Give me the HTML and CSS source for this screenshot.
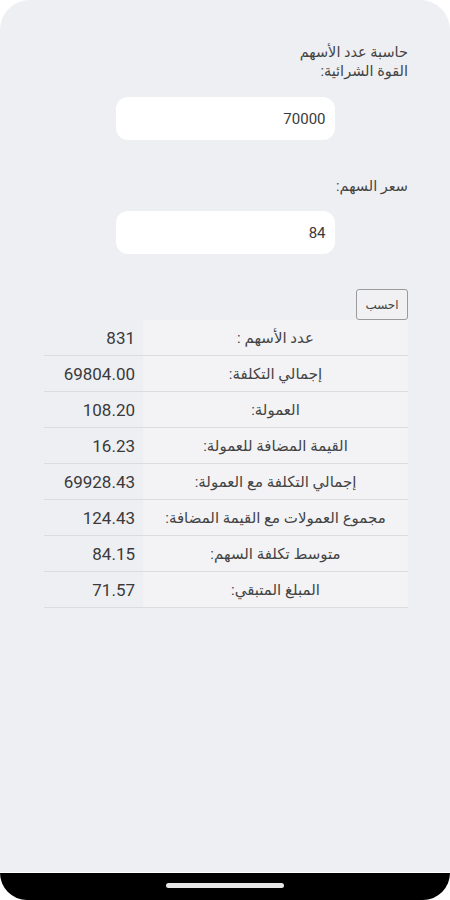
FILE: index.html
```html
<!DOCTYPE html>
<html lang="ar" dir="rtl">
<head>
    <meta charset="UTF-8">
    <meta name="viewport" content="width=device-width, initial-scale=1.0">
    <title>حاسبة عدد الأسهم</title>
    <link rel="stylesheet" href="styles.css">
</head>
<body>

    <div class="screen">
        <div class="app">
            <label class="label" for="power">حاسبة عدد الأسهم<br>القوة الشرائية:</label>
            <input type="text" id="power" class="field" value="70000">

            <label class="label label-price" for="price">سعر السهم:</label>
            <input type="text" id="price" class="field" value="84">

            <div class="actions">
                <button class="calc-btn">احسب</button>
            </div>

            <table class="results">
                <tr><td class="name">عدد الأسهم :</td><td class="val">831</td></tr>
                <tr><td class="name">إجمالي التكلفة:</td><td class="val">69804.00</td></tr>
                <tr><td class="name">العمولة:</td><td class="val">108.20</td></tr>
                <tr><td class="name">القيمة المضافة للعمولة:</td><td class="val">16.23</td></tr>
                <tr><td class="name">إجمالي التكلفة مع العمولة:</td><td class="val">69928.43</td></tr>
                <tr><td class="name">مجموع العمولات مع القيمة المضافة:</td><td class="val">124.43</td></tr>
                <tr><td class="name">متوسط تكلفة السهم:</td><td class="val">84.15</td></tr>
                <tr><td class="name">المبلغ المتبقي:</td><td class="val">71.57</td></tr>
            </table>
        </div>

        <div class="navbar">
            <span class="home-bar"></span>
        </div>
    </div>

</body>
</html>
```

FILE: styles.css
```css
/* Basic page */
html {
    background: #ffffff;
}

body {
    margin: 0;
    font-family: Roboto, "DejaVu Sans", sans-serif;
    color: #444444;
}

.screen {
    height: 900px;
    display: flex;
    flex-direction: column;
}

/* Main app area */
.app {
    flex: 1;
    background: #eeeff3;
    border-radius: 30px 30px 0 0;
    padding: 43px 42px 0 42px;
}

.label {
    display: block;
    font-size: 14.5px;
    line-height: 19px;
}

.label-price {
    margin-top: 37px;
}

.field {
    display: block;
    box-sizing: border-box;
    width: 219px;
    height: 43px;
    margin: 16px auto 0 auto;
    padding: 0 9px;
    border: none;
    border-radius: 12px;
    background: #ffffff;
    font-family: Roboto, "DejaVu Sans", sans-serif;
    font-size: 15px;
    color: #3a3a3a;
    text-align: right;
}

.label-price + .field {
    margin-top: 15px;
}

.field:focus {
    outline: none;
}

/* Calculate button */
.actions {
    margin-top: 35px;
    display: flex;
}

.calc-btn {
    width: 52px;
    height: 31px;
    padding: 0;
    background: #f1f1f3;
    border: 1px solid #9a9a9a;
    border-radius: 3px;
    font-family: "DejaVu Sans", sans-serif;
    font-size: 12px;
    color: #444444;
}

/* Results table */
.results {
    width: 364px;
    border-collapse: collapse;
}

.results td {
    height: 35px;
    padding: 0;
    border-bottom: 1px solid #dcdcde;
}

.results .name {
    width: 265px;
    background: #f3f3f5;
    text-align: center;
    font-size: 15px;
}

.results .val {
    direction: ltr;
    text-align: right;
    padding-right: 8px;
    font-size: 17px;
    color: #3a3a3a;
}

/* Bottom system bar */
.navbar {
    height: 27px;
    margin-top: 1px;
    background: #000000;
    border-radius: 0 0 28px 28px;
    display: flex;
    justify-content: center;
    align-items: center;
}

.home-bar {
    width: 118px;
    height: 5px;
    border-radius: 3px;
    background: #e6e6e6;
    margin-top: -3px;
}
```
